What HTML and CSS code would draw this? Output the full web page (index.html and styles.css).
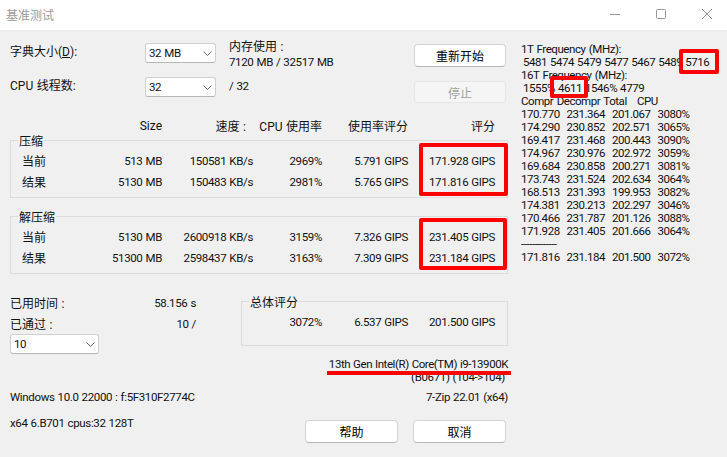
FILE: index.html
```html
<!DOCTYPE html>
<html lang="zh-CN">
<head>
<meta charset="utf-8">
<title>基准测试</title>
<link rel="stylesheet" href="styles.css">
</head>
<body>
<div class="window">
  <header class="titlebar">
    <span class="title">基准测试</span>
    <div class="controls">
      <svg class="ctl" width="10" height="10" viewBox="0 0 10 10"><path d="M0 5.5H10" stroke="#999" fill="none"/></svg>
      <svg class="ctl" width="10" height="10" viewBox="0 0 10 10"><rect x="0.5" y="0.5" width="9" height="9" rx="1" stroke="#999" fill="none"/></svg>
      <svg class="ctl" width="10" height="10" viewBox="0 0 10 10"><path d="M0 0L10 10M10 0L0 10" stroke="#999" fill="none"/></svg>
    </div>
  </header>
  <main class="content">
    <section class="left">
      <div class="top">
        <span class="lbl">字典大小(<u>D</u>):</span>
        <div class="select s-small"><span>32 MB</span><svg width="9" height="5" viewBox="0 0 9 5"><path d="M0.5 0.5L4.5 4.5L8.5 0.5" stroke="#666" fill="none"/></svg></div>
        <div class="mem"><div class="cjk">内存使用 :</div><div>7120 MB / 32517 MB</div></div>
        <button class="btn b-start">重新开始</button>
        <span class="lbl">CPU 线程数:</span>
        <div class="select s-small"><span>32</span><svg width="9" height="5" viewBox="0 0 9 5"><path d="M0.5 0.5L4.5 4.5L8.5 0.5" stroke="#666" fill="none"/></svg></div>
        <div class="threads">/ 32</div>
        <button class="btn disabled b-stop">停止</button>
      </div>
      <div class="stat head">
        <span></span><span>Size</span><span class="speed">速度 :</span><span>CPU 使用率</span><span>使用率评分</span><span>评分</span>
      </div>
      <div class="group g-main">
        <div class="legend">压缩</div>
        <div class="stat"><span class="name">当前</span><span>513 MB</span><span>150581 KB/s</span><span>2969%</span><span>5.791 GIPS</span><span>171.928 GIPS</span></div>
        <div class="stat"><span class="name">结果</span><span>5130 MB</span><span>150483 KB/s</span><span>2981%</span><span>5.765 GIPS</span><span>171.816 GIPS</span></div>
      </div>
      <div class="group g-main g-second">
        <div class="legend">解压缩</div>
        <div class="stat"><span class="name">当前</span><span>5130 MB</span><span>2600918 KB/s</span><span>3159%</span><span>7.326 GIPS</span><span>231.405 GIPS</span></div>
        <div class="stat"><span class="name">结果</span><span>51300 MB</span><span>2598437 KB/s</span><span>3163%</span><span>7.309 GIPS</span><span>231.184 GIPS</span></div>
      </div>
      <div class="lower">
        <div class="progress">
          <div class="kv"><span class="cjk">已用时间 :</span><span>58.156 s</span></div>
          <div class="kv"><span class="cjk">已通过 :</span><span>10 /</span></div>
          <div class="select s-wide"><span>10</span><svg width="9" height="5" viewBox="0 0 9 5"><path d="M0.5 0.5L4.5 4.5L8.5 0.5" stroke="#666" fill="none"/></svg></div>
        </div>
        <div class="group g-total">
          <div class="legend">总体评分</div>
          <div class="stat total"><span>3072%</span><span>6.537 GIPS</span><span>201.500 GIPS</span></div>
        </div>
      </div>
      <div class="cpu">
        <div class="cpu-name">13th Gen Intel(R) Core(TM) i9-13900K</div>
        <div class="micro">(B0671) (104-&gt;104)</div>
      </div>
      <div class="sysrow"><span>Windows 10.0 22000 : f:5F310F2774C</span><span>7-Zip 22.01 (x64)</span></div>
      <div class="footer">
        <span class="arch">x64 6.B701 cpus:32 128T</span>
        <div class="actions"><button class="btn b-foot">帮助</button><button class="btn b-foot">取消</button></div>
      </div>
    </section>
    <pre class="log">1T Frequency (MHz):
<span class="freq"> 5481 5474 5479 5477 5467 5489 5716</span>
16T Frequency (MHz):
<span class="freq"> 1555% 4611 1546% 4779</span>
Compr Decompr Total   CPU
170.770  231.364  201.067  3080%
174.290  230.852  202.571  3065%
169.417  231.468  200.443  3090%
174.967  230.976  202.972  3059%
169.684  230.858  200.271  3081%
173.743  231.524  202.634  3064%
168.513  231.393  199.953  3082%
174.381  230.213  202.297  3046%
170.466  231.787  201.126  3088%
171.928  231.405  201.666  3064%
-------------
171.816  231.184  201.500  3072%</pre>
  </main>
  <div class="mark m-comp"></div>
  <div class="mark m-dec"></div>
  <div class="mark m-1t"></div>
  <div class="mark m-16t"></div>
  <div class="redline"></div>
</div>
</body>
</html>
```
FILE: styles.css
```css
* { box-sizing: border-box; }
html, body { margin: 0; padding: 0; }
body {
  font-family: Roboto, "Noto Sans CJK SC", sans-serif;
  font-size: 11.5px;
  letter-spacing: -0.35px;
  word-spacing: 0.5px;
  color: #111;
  background: #f0f0f0;
}
.window { position: relative; width: 727px; height: 457px; overflow: hidden; background: #f0f0f0; }
.titlebar {
  height: 30px; background: #fff; display: flex; align-items: center;
  justify-content: space-between; padding: 0 15px 2px 6px;
}
.title { font-size: 12px; letter-spacing: 0; color: #9a9a9a; }
.controls { display: flex; gap: 36px; }
.content { display: flex; align-items: flex-start; }
.left { width: 498px; margin-left: 10px; flex: none; }
.top {
  display: grid;
  grid-template-columns: 135px 71px 198px 92px;
  grid-template-rows: 34px 34px;
  padding-top: 13px;
  box-sizing: content-box;
}
.lbl { font-size: 12px; letter-spacing: 0; line-height: 20px; margin-top: -1px; }
.cjk { font-size: 12px; letter-spacing: 0; }
.select {
  height: 20px; background: #fff; border: 1px solid #d0d0d0; border-bottom-color: #b5b5b5;
  border-radius: 3px; display: flex; align-items: center; justify-content: space-between;
  padding: 0 3px 0 3px;
}
.s-small { width: 71px; }
.s-wide { width: 89px; }
.mem { padding-left: 13px; line-height: 15px; margin-top: -3px; }
.threads { padding-left: 13px; margin-top: 1px; line-height: 16px; }
.btn {
  font-family: inherit; font-size: 12px; letter-spacing: 0; color: #000; background: #fff;
  border: 1px solid #d4d4d4; border-bottom-color: #b8b8b8; border-radius: 4px; padding: 0; margin: 0;
}
.btn.disabled { background: #f5f5f5; border-color: #e6e6e6; color: #a0a0a0; }
.b-start { height: 23px; margin-top: 1px; }
.b-stop { height: 22px; margin-top: 4px; }
.b-foot { width: 93px; height: 23px; }
.stat {
  display: grid;
  grid-template-columns: 30px 110px 91px 69px 86px 87px;
  height: 21px; align-items: center; text-align: right;
  padding-left: 12px;
  white-space: nowrap;
}
.stat .name { text-align: left; font-size: 12px; letter-spacing: 0; }
.head { margin-top: 4px; font-size: 12px; letter-spacing: 0; }
.speed { padding-right: 7px; }
.group { border: 1px solid #dcdcdc; }
.legend {
  width: fit-content; margin: -6px 0 0 7px; padding: 0 1px; height: 14px; line-height: 14px;
  background: #f0f0f0; font-size: 12px; letter-spacing: 0;
}
.g-main { height: 58px; margin-top: 4px; }
.g-main .stat { padding-left: 11px; }
.g-main .legend { margin-bottom: 1px; }
.g-second { margin-top: 18px; }
.lower { display: flex; justify-content: space-between; align-items: flex-start; margin-top: 18px; }
.progress { width: 186px; }
.kv { height: 21px; display: flex; justify-content: space-between; align-items: center; }
.g-total { width: 267px; height: 45px; margin-top: 9px; }
.g-total .legend { margin-left: 7px; }
.total { grid-template-columns: 80px 86px 87px; padding-left: 0; margin-top: 1px; }
.cpu { text-align: right; line-height: 13px; margin-top: 4px; }
.cpu-name { letter-spacing: -0.43px; }
.micro { padding-right: 3px; }
.sysrow { display: flex; justify-content: space-between; line-height: 13px; margin-top: 7px; }
.footer { display: flex; justify-content: space-between; align-items: flex-start; margin-top: 13px; }
.arch { line-height: 13px; }
.actions { display: flex; gap: 15px; margin-top: 3px; margin-right: 2px; }
.log {
  margin: 0 0 0 13px; padding: 13px 0 0 0; font-family: inherit; font-size: 11.5px;
  letter-spacing: -0.45px; word-spacing: 1px;
  line-height: 13px; white-space: pre;
}
.freq { word-spacing: 0.6px; margin-left: -1px; }
.mark { position: absolute; border: 4px solid #f00; border-radius: 2px; }
.m-comp { left: 419px; top: 143px; width: 89px; height: 53px; }
.m-dec { left: 419px; top: 218px; width: 88px; height: 52px; }
.m-1t { left: 679px; top: 49px; width: 40px; height: 25px; }
.m-16t { left: 550px; top: 76px; width: 38px; height: 22px; }
.redline { position: absolute; left: 327px; top: 371px; width: 184px; height: 4px; background: #f00; }
```
